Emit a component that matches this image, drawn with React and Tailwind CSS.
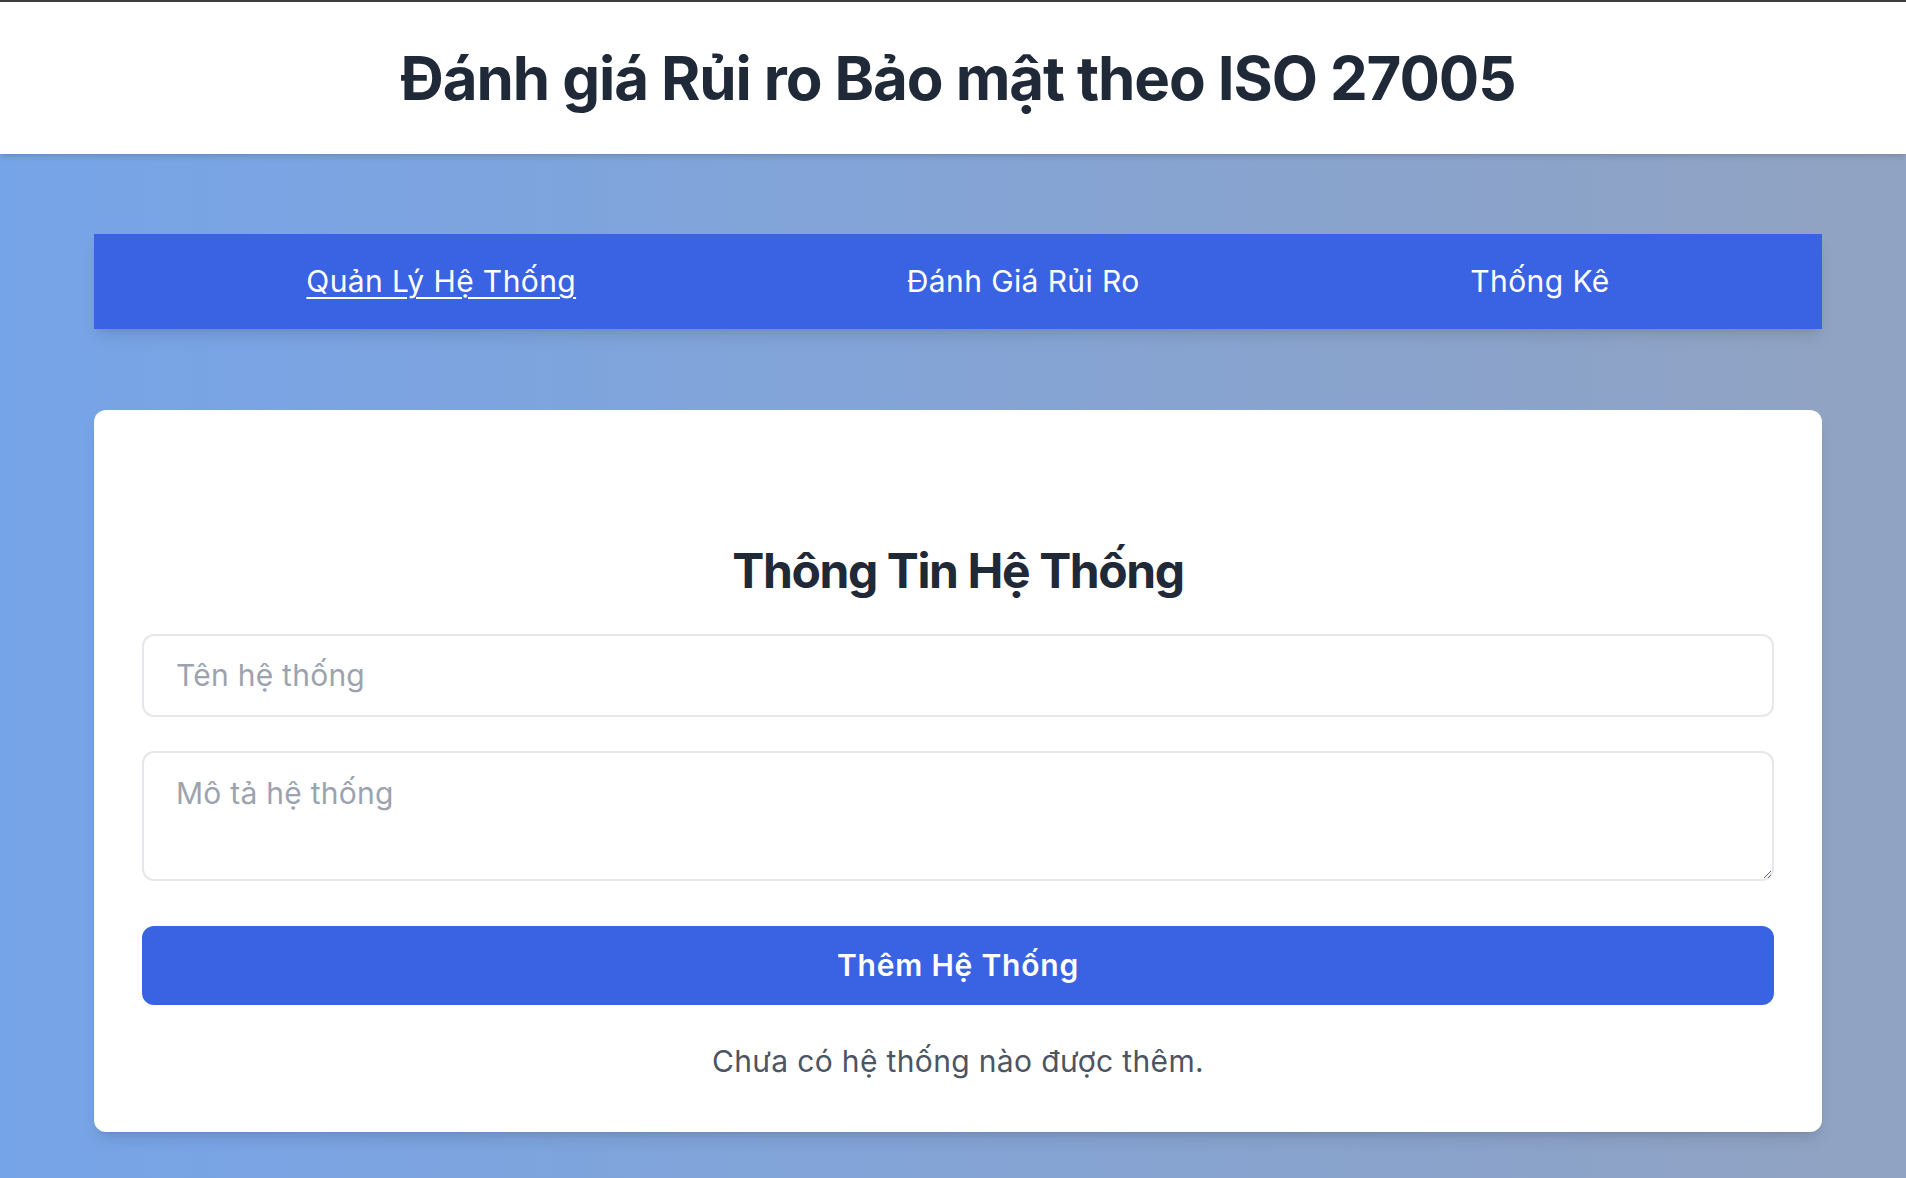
export default function App() {
  return (
    <div className="min-h-screen bg-linear-to-r from-[#76a4e8] to-[#91a3c2] font-['Inter',sans-serif]">
      <header className="h-[154px] bg-white border-t-2 border-[#3d3d3d] shadow-md flex items-center justify-center pl-[10px] relative z-10">
        <h1 className="text-[60px] leading-[1.2] font-bold text-[#1f2937] tracking-[-1.1px]">
          Đánh giá Rủi ro Bảo mật theo ISO 27005
        </h1>
      </header>
      <main className="pl-[94px] pr-[84px] pt-[80px] pb-[45px]">
        <nav className="h-[95px] bg-[#3a63e4] shadow-lg flex items-center justify-around px-[47px] text-white text-[30px] tracking-[0.4px]">
          <a href="#" className="underline underline-offset-[5px] decoration-[2px]">Quản Lý Hệ Thống</a>
          <a href="#">Đánh Giá Rủi Ro</a>
          <a href="#">Thống Kê</a>
        </nav>
        <section className="mt-[81px] bg-white rounded-xl shadow-lg px-12 pt-[132px] pb-12">
          <h2 className="text-[48px] leading-[1.2] font-bold text-[#1f2937] text-center mb-[34px] tracking-[-1.4px]">
            Thông Tin Hệ Thống
          </h2>
          <input
            type="text"
            placeholder="Tên hệ thống"
            className="block w-full h-[83px] border-2 border-[#e6e7eb] rounded-xl px-[32px] text-[30px] leading-[36px] tracking-[0.25px] text-[#1f2937] placeholder:text-[#9ca3af] outline-none"
          />
          <textarea
            placeholder="Mô tả hệ thống"
            className="block w-full h-[130px] mt-[34px] border-2 border-[#e6e7eb] rounded-xl px-[32px] pt-[22px] text-[30px] leading-[36px] tracking-[0.25px] text-[#1f2937] placeholder:text-[#9ca3af] outline-none"
          />
          <button className="block w-full h-[79px] mt-[45px] rounded-xl bg-[#3a63e4] text-white text-[30px] font-semibold tracking-[0.8px]">
            Thêm Hệ Thống
          </button>
          <p className="mt-[34px] text-center text-[30px] leading-[45px] tracking-[0.35px] text-[#4b5563]">
            Chưa có hệ thống nào được thêm.
          </p>
        </section>
      </main>
    </div>
  );
}
